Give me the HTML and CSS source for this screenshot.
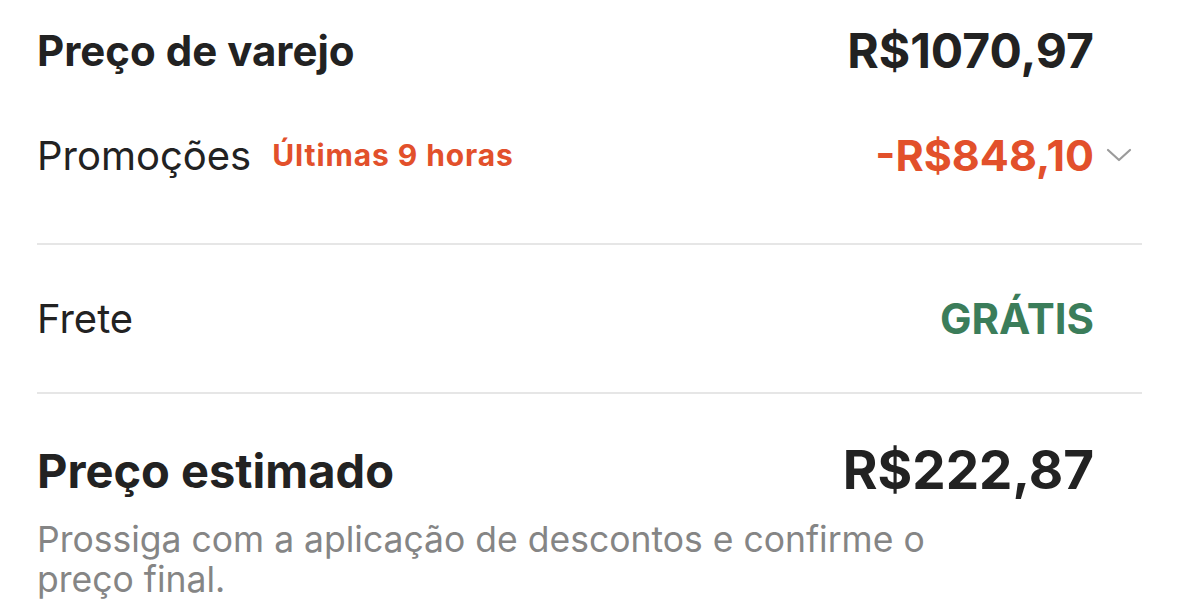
FILE: index.html
```html
<!DOCTYPE html>
<html lang="pt-BR">
<head>
    <meta charset="UTF-8">
    <meta name="viewport" content="width=device-width, initial-scale=1.0">
    <title>Resumo do pedido</title>
    <link rel="stylesheet" href="styles.css">
</head>
<body>
    <div class="summary">
        <div class="row row-retail">
            <div class="label strong">Preço de varejo</div>
            <div class="value-cell">
                <span class="value big">R$1070,97</span>
                <span class="slot"></span>
            </div>
        </div>
        <div class="row row-promo">
            <div class="label">
                Promoções <span class="tag">Últimas 9 horas</span>
            </div>
            <div class="value-cell">
                <span class="value discount">-R$848,10</span>
                <span class="slot">
                    <svg class="chevron" width="26" height="16" viewBox="0 0 26 16">
                        <path d="M2 3 L13 13 L24 3" fill="none" stroke="#9b9b9b" stroke-width="2.2" stroke-linecap="round" stroke-linejoin="round"/>
                    </svg>
                </span>
            </div>
        </div>

        <div class="divider"></div>

        <div class="row row-ship">
            <div class="label">Frete</div>
            <div class="value-cell">
                <span class="value free">GRÁTIS</span>
                <span class="slot"></span>
            </div>
        </div>

        <div class="divider"></div>

        <div class="row row-total">
            <div class="label strong big">Preço estimado</div>
            <div class="value-cell">
                <span class="value total">R$222,87</span>
                <span class="slot"></span>
            </div>
        </div>
        <p class="note">Prossiga com a aplicação de descontos e confirme o preço final.</p>
    </div>
</body>
</html>
```

FILE: styles.css
```css
body {
    margin: 0; padding: 0; background-color: #ffffff;
    font-family: Inter, 'Noto Sans', sans-serif;
    color: #222222;
}

.summary {
    padding: 0 36px 0 37px;
}

.row {
    display: flex; justify-content: space-between; align-items: center;
}
.row-retail { height: 100px; }
.row-promo { height: 110px; margin-bottom: 33px; }
.row-ship { height: 147px; }
.row-total { height: 60px; margin-top: 46px; }

.label { font-size: 40px; font-weight: 400; display: flex; align-items: center; }
.label.strong { font-weight: 700; font-size: 42px; }
.label.big { font-size: 47px; }

.tag {
    font-size: 30px; font-weight: 700; color: #e2502b;
    margin-left: 21px; letter-spacing: 0.9px;
}

.value-cell { display: flex; align-items: center; }
.value { font-weight: 700; font-size: 42px; }
.value.big { font-size: 48px; }
.value.total { font-size: 53px; }
.value.discount { font-size: 43px; color: #e2502b; }
.value.free { color: #3b7d5a; }

.slot { width: 48px; display: flex; align-items: center; }
.chevron { margin-left: 12px; }

.divider { height: 2px; background-color: #e6e6e6; }

.note {
    margin: 20px 0 0; max-width: 930px;
    font-size: 35.5px; line-height: 40px; color: #858585;
}
```
